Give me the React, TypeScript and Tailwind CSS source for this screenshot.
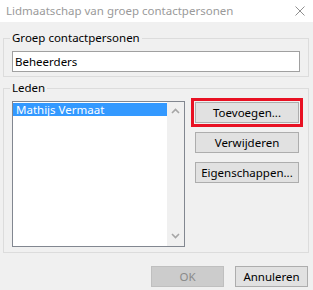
import React from 'react';

const font = "font-['Noto_Sans',sans-serif]";

const Button = ({ label, disabled, focused, className = '' }: { label: string; disabled?: boolean; focused?: boolean; className?: string }) => (
  <button
    className={
      'h-[21px] border text-[11.5px] leading-none flex items-center justify-center ' +
      (disabled ? 'bg-[#cccccc] border-[#bfbfbf] text-[#8a8a8a] ' : 'bg-[#e1e1e1] border-[#adadad] text-black ') +
      (focused ? 'outline-[3px] outline-solid outline-[#e81123] outline-offset-[1px] ' : '') +
      className
    }
  >
    {label}
  </button>
);

export default function App() {
  return (
    <div className={`w-[313px] h-[290px] bg-[#f0f0f0] text-[11.5px] text-black flex flex-col ${font}`}>
      {/* Title bar */}
      <div className="h-[22px] bg-white flex items-center justify-between pl-[6px] pr-[8px] text-[#9a9a9a]">
        <span>Lidmaatschap van groep contactpersonen</span>
        <svg width="10" height="10" viewBox="0 0 10 10">
          <path d="M0.5 0.5 L9.5 9.5 M9.5 0.5 L0.5 9.5" stroke="#8f8f8f" strokeWidth="1" />
        </svg>
      </div>

      <div className="flex flex-col pl-[3px] pr-[4px] pt-[8px]">
        {/* Groep */}
        <fieldset className="border border-[#dcdcdc] px-[8px] pb-[4px]">
          <legend className="-ml-[2px] px-[2px] leading-[16px]">Groep contactpersonen</legend>
          <input
            readOnly
            value="Beheerders"
            className="mt-[5px] h-[21px] w-full border border-[#a0a0a0] bg-white px-[2px] text-[11.5px] outline-none"
          />
        </fieldset>

        {/* Leden */}
        <fieldset className="mt-[3px] border border-[#dcdcdc] px-[8px] pb-[5px]">
          <legend className="-ml-[2px] px-[2px] leading-[16px]">Leden</legend>
          <div className="mt-[5px] flex gap-[10px]">
            <div className="w-[173px] h-[146px] border border-[#828790] bg-white flex">
              <div className="flex-1 pt-[1px]">
                <div className="h-[13px] bg-[#3399ff] text-white leading-[13px] pl-[3px]">Mathijs Vermaat</div>
              </div>
              <div className="w-[17px] bg-[#f0f0f0] flex flex-col items-center justify-between pt-[6px] pb-[7px]">
                <svg width="9" height="6" viewBox="0 0 9 6">
                  <path d="M1 5 L4.5 1.5 L8 5" fill="none" stroke="#a6a6a6" strokeWidth="1.6" />
                </svg>
                <svg width="9" height="6" viewBox="0 0 9 6">
                  <path d="M1 1 L4.5 4.5 L8 1" fill="none" stroke="#a6a6a6" strokeWidth="1.6" />
                </svg>
              </div>
            </div>
            <div className="w-[104px] flex flex-col gap-[9px] pt-[1px]">
              <Button label="Toevoegen..." focused />
              <Button label="Verwijderen" />
              <Button label="Eigenschappen..." />
            </div>
          </div>
        </fieldset>

        {/* Footer */}
        <div className="mt-[13px] flex justify-end gap-[11px] pr-[1px]">
          <Button label="OK" disabled className="w-[73px]" />
          <Button label="Annuleren" className="w-[73px]" />
        </div>
      </div>
    </div>
  );
}
